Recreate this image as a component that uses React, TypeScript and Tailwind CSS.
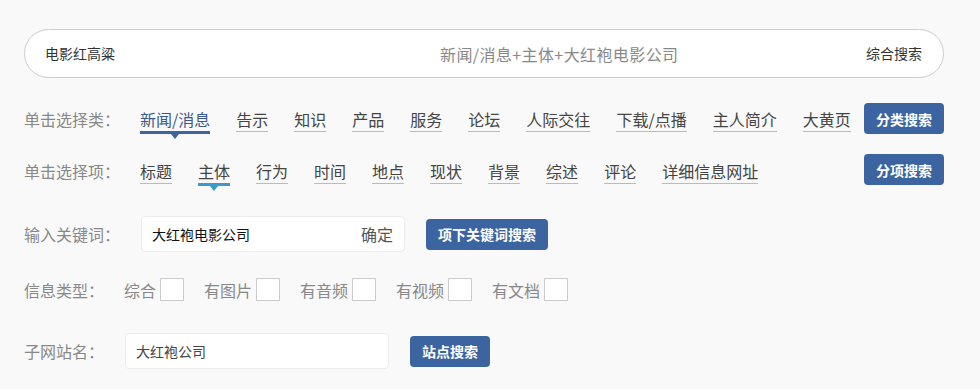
import { useState } from 'react';

const font = { fontFamily: '"Noto Sans CJK SC", "Noto Sans", sans-serif' };

const categories = ['新闻/消息', '告示', '知识', '产品', '服务', '论坛', '人际交往', '下载/点播', '主人简介', '大黄页'];
const fields = ['标题', '主体', '行为', '时间', '地点', '现状', '背景', '综述', '评论', '详细信息网址'];
const types = ['综合', '有图片', '有音频', '有视频', '有文档'];

function NavItem({ label, active, dark, onClick }: { label: string; active: boolean; dark: boolean; onClick: () => void }) {
  if (active) {
    return (
      <button
        onClick={onClick}
        className={
          'relative text-[16px] leading-[20px] pb-[2px] border-b-[3px] ' +
          (dark ? 'border-[#3b64a0] text-[#3a5a8e]' : 'border-[#3c99d0] text-[#444]')
        }
      >
        {label}
        <span
          className={
            'absolute left-1/2 -translate-x-1/2 top-[calc(100%+3px)] w-0 h-0 border-x-[4px] border-t-[5px] border-x-transparent ' +
            (dark ? 'border-t-[#3b64a0]' : 'border-t-[#3c99d0]')
          }
        />
      </button>
    );
  }
  return (
    <button onClick={onClick} className="text-[16px] leading-[20px] pb-[2px] border-b border-[#bbb] text-[#444]">
      {label}
    </button>
  );
}

function BlueButton({ children, className = '' }: { children: React.ReactNode; className?: string }) {
  return (
    <button className={'h-[31px] px-3 shrink-0 rounded-[4px] bg-[#3b64a0] text-white font-bold text-[14px] leading-none ' + className}>
      {children}
    </button>
  );
}

export default function App() {
  const [cat, setCat] = useState(0);
  const [field, setField] = useState(1);
  const [checked, setChecked] = useState<boolean[]>([false, false, false, false, false]);

  return (
    <div className="min-h-screen bg-[#f9f9f9] pl-6 pr-9 pt-[29px] pb-5" style={font}>
      {/* main search bar */}
      <div className="h-[49px] flex items-center rounded-full border border-[#ccc] bg-white pl-[20px] pr-[21px]">
        <span className="w-[395px] shrink-0 text-[14px] text-[#333]">电影红高粱</span>
        <span className="text-[16px] tracking-[0.4px] text-[#888]">新闻/消息+主体+大红袍电影公司</span>
        <span className="ml-auto text-[14px] text-[#333]">综合搜索</span>
      </div>

      {/* category row */}
      <div className="mt-[25px] flex items-start">
        <div className="mt-[6px] flex items-start">
          <span className="w-[116px] shrink-0 text-[16px] leading-[20px] text-[#888]">单击选择类：</span>
          <div className="flex items-start gap-[26px]">
            {categories.map((c, i) => (
              <NavItem key={c} label={c} active={cat === i} dark onClick={() => setCat(i)} />
            ))}
          </div>
        </div>
        <BlueButton className="ml-auto w-[80px]">分类搜索</BlueButton>
      </div>

      {/* field row */}
      <div className="mt-[20px] flex items-start">
        <div className="mt-[7px] flex items-start">
          <span className="w-[116px] shrink-0 text-[16px] leading-[20px] text-[#888]">单击选择项：</span>
          <div className="flex items-start gap-[26px]">
            {fields.map((f, i) => (
              <NavItem key={f} label={f} active={field === i} dark={false} onClick={() => setField(i)} />
            ))}
          </div>
        </div>
        <BlueButton className="ml-auto w-[80px]">分项搜索</BlueButton>
      </div>

      {/* keyword row */}
      <div className="mt-[30px] h-[36px] flex items-center">
        <span className="w-[117px] shrink-0 text-[16px] text-[#888]">输入关键词：</span>
        <div className="w-[264px] h-[36px] flex items-center rounded-[4px] border border-[#ececec] bg-white pl-[10px] pr-[11px]">
          <span className="text-[14px] text-[#111]">大红袍电影公司</span>
          <span className="ml-auto text-[16px] text-[#555]">确定</span>
        </div>
        <BlueButton className="ml-[21px]">项下关键词搜索</BlueButton>
      </div>

      {/* info type row */}
      <div className="mt-[26px] h-[23px] flex items-center">
        <span className="w-[100px] shrink-0 text-[16px] text-[#888]">信息类型：</span>
        <div className="flex items-center gap-[20px]">
          {types.map((t, i) => (
            <label key={t} className="flex items-center gap-[4px] text-[16px] text-[#888] cursor-pointer">
              {t}
              <span
                onClick={() => setChecked(checked.map((v, j) => (j === i ? !v : v)))}
                className="w-[24px] h-[23px] border border-[#ccc] bg-white flex items-center justify-center text-[12px] text-[#3b64a0]"
              >
                {checked[i] ? '✓' : ''}
              </span>
            </label>
          ))}
        </div>
      </div>

      {/* subsite row */}
      <div className="mt-[32px] h-[36px] flex items-center">
        <span className="w-[101px] shrink-0 text-[16px] text-[#888]">子网站名：</span>
        <div className="w-[264px] h-[36px] flex items-center rounded-[4px] border border-[#ececec] bg-white pl-[10px]">
          <span className="text-[14px] text-[#444]">大红袍公司</span>
        </div>
        <BlueButton className="ml-[21px] w-[80px]">站点搜索</BlueButton>
      </div>
    </div>
  );
}
